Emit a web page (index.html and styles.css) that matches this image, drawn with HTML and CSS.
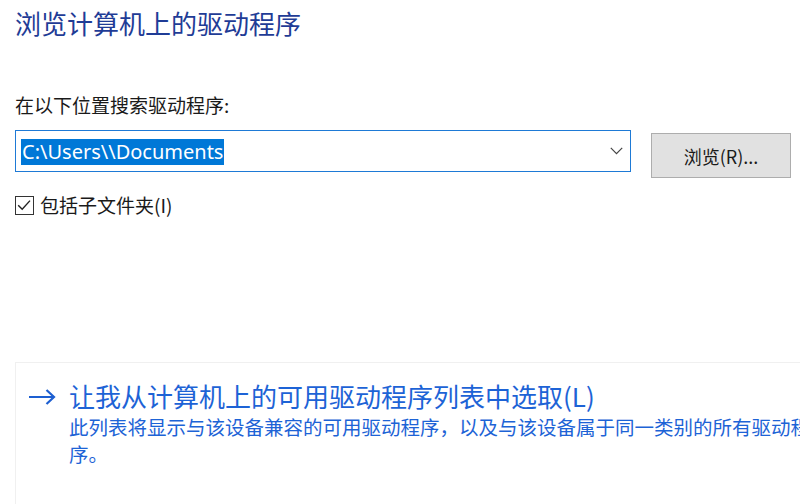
FILE: index.html
```html
<!DOCTYPE html>
<html lang="zh-CN">
<head>
<meta charset="utf-8">
<title>浏览计算机上的驱动程序</title>
<link rel="stylesheet" href="styles.css">
</head>
<body>
<div class="page">
  <h1 class="title">浏览计算机上的驱动程序</h1>
  <div class="label">在以下位置搜索驱动程序:</div>
  <div class="path-row">
    <div class="combo">
      <span class="combo-text"><span class="sel">C:\Users\\Documents</span></span>
      <svg class="chevron" width="13" height="8" viewBox="0 0 13 8"><path d="M0.8 0.8 L6.5 6.6 L12.2 0.8" fill="none" stroke="#444" stroke-width="1.2"/></svg>
    </div>
    <button class="browse">浏览(R)...</button>
  </div>
  <label class="check-row">
    <span class="checkbox"><svg width="18" height="18" viewBox="0 0 18 18"><path d="M3.2 9.2 L7.2 13.2 L15 4.6" fill="none" stroke="#222" stroke-width="1.4"/></svg></span>
    <span class="check-label">包括子文件夹(I)</span>
  </label>
  <div class="link-box">
    <svg class="arrow" width="28" height="16" viewBox="0 0 28 16"><path d="M1 8 H26 M18.5 1 L26 8 L18.5 15" fill="none" stroke="#1d5fd1" stroke-width="2.2"/></svg>
    <div class="link-body">
      <div class="link-title">让我从计算机上的可用驱动程序列表中选取(L)</div>
      <div class="link-desc">此列表将显示与该设备兼容的可用驱动程序，以及与该设备属于同一类别的所有驱动程序。</div>
    </div>
  </div>
</div>
</body>
</html>
```

FILE: styles.css
```css
html, body {
  margin: 0;
  padding: 0;
  background: #ffffff;
  overflow: hidden;
  height: 504px;
}
body {
  font-family: "Noto Sans CJK SC", "Noto Sans", sans-serif;
  color: #1a1a1a;
}
.page {
  padding: 8px 0 0 15px;
}
.title {
  margin: 0;
  font-size: 26px;
  line-height: 30px;
  font-weight: 400;
  color: #1f3c96;
}
.label {
  margin-top: 56px;
  font-size: 19px;
  line-height: 22px;
}
.path-row {
  margin-top: 14px;
  display: flex;
  align-items: flex-start;
}
.combo {
  box-sizing: border-box;
  width: 616px;
  height: 42px;
  border: 1px solid #1e7ad6;
  display: flex;
  align-items: center;
  padding: 0 7px 0 5px;
}
.combo-text {
  flex: 1;
  font-family: "Noto Sans", sans-serif;
  font-size: 20px;
}
.sel {
  display: inline-block;
  background: #0078d7;
  color: #ffffff;
  line-height: 26px;
  padding: 0 1px;
}
.chevron {
  display: block;
}
.browse {
  margin: 3px 0 0 20px;
  box-sizing: border-box;
  width: 140px;
  height: 45px;
  background: #e1e1e1;
  border: 1px solid #adadad;
  border-radius: 0;
  font-family: "Noto Sans CJK SC", sans-serif;
  font-size: 18px;
  color: #1a1a1a;
  padding: 0;
}
.check-row {
  margin-top: 16px;
  display: flex;
  align-items: center;
  gap: 6px;
}
.checkbox {
  box-sizing: border-box;
  width: 19px;
  height: 19px;
  border: 1px solid #333333;
  display: flex;
}
.checkbox svg {
  display: block;
  margin: -1px 0 0 -1px;
}
.check-label {
  font-size: 19px;
  line-height: 22px;
}
.link-box {
  margin-top: 146px;
  width: 820px;
  height: 200px;
  border: 1px solid #f0f0f0;
  display: flex;
  align-items: flex-start;
  padding: 17px 0 0 12px;
  gap: 13px;
}
.arrow {
  display: block;
  margin-top: 9px;
  flex: none;
}
.link-body {
  width: 745px;
  color: #1d63d6;
}
.link-title {
  font-size: 26px;
  line-height: 32px;
}
.link-desc {
  margin-top: 1px;
  font-size: 19.5px;
  line-height: 27px;
}
```
